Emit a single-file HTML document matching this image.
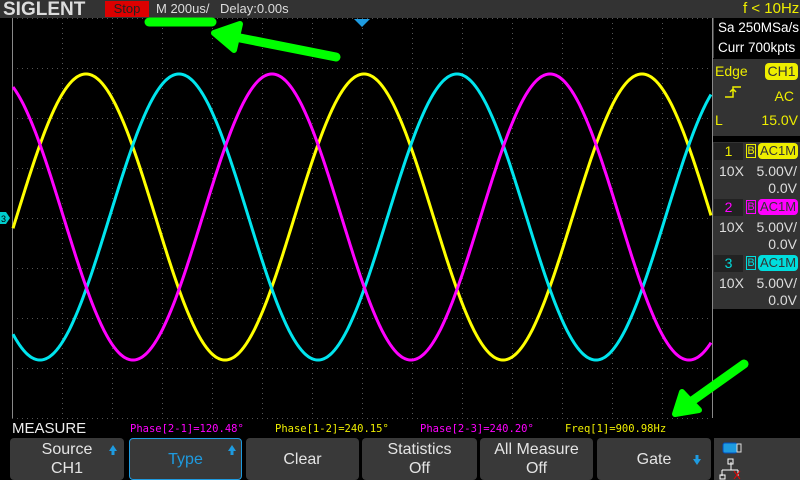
<!DOCTYPE html>
<html><head><meta charset="utf-8"><style>
*{margin:0;padding:0;box-sizing:border-box}
body{width:800px;height:480px;background:#000;position:relative;overflow:hidden;font-family:"Liberation Sans",sans-serif}
.abs{position:absolute}
.top{left:0;top:0;width:800px;height:18px;background:#333}
.btn{position:absolute;top:438px;height:42px;background:#393939;border-radius:4px;color:#e4e4e4;font-size:16px;text-align:center;line-height:19px;display:flex;flex-direction:column;justify-content:center}
.rp{position:absolute;left:713px;width:87px;color:#fff;font-size:13px;white-space:nowrap}
.mono{font-family:"DejaVu Sans Mono","Liberation Mono",monospace;font-size:10.5px;position:absolute;top:423px}
</style></head><body>
<div class="abs top"></div>
<div class="abs" style="left:3px;top:-1px;font-size:19px;font-weight:bold;color:#ddd;letter-spacing:0px;transform:scaleX(1.0);transform-origin:left">SIGLENT</div>
<div class="abs" style="left:105px;top:1px;width:44px;height:16px;background:#d00;color:#222;font-size:13px;text-align:center;line-height:16px">Stop</div>
<div class="abs" style="left:156px;top:1px;color:#ddd;font-size:13px">M 200us/</div>
<div class="abs" style="left:220px;top:1px;color:#ddd;font-size:13px">Delay:0.00s</div>
<div class="abs" style="left:743px;top:0px;color:#ee0;font-size:15px">f &lt; 10Hz</div>

<svg class="abs" style="left:0;top:0" width="800" height="480" id="sv">
<g stroke="#555" stroke-width="1" stroke-dasharray="1,4" id="grid"></g>
<line x1="12.5" y1="18" x2="12.5" y2="418" stroke="#888"/>
<line x1="712.5" y1="18" x2="712.5" y2="418" stroke="#888"/>
<polygon points="354,19 370,19 362,27" fill="#1e9be0"/>
<polygon points="0,212 6,212 10,218 6,224 0,224" fill="#0cc"/>
<text x="1" y="222" font-size="9" fill="#000" font-family="Liberation Sans">3</text>
<g fill="none" stroke-width="3" id="waves"></g>
<g stroke="#00ff00" stroke-linecap="round" fill="#00ff00">
<line x1="149" y1="22" x2="212" y2="22" stroke-width="9"/>
<line x1="336" y1="57" x2="235" y2="37" stroke-width="9"/>
<polygon points="214,33 240,24 234,50" stroke-width="6" stroke-linejoin="round"/>
<line x1="744" y1="364" x2="692" y2="401" stroke-width="9"/>
<polygon points="675,414 682,392 699,410" stroke-width="6" stroke-linejoin="round"/>
</g>
</svg>

<div class="rp" style="top:18px;height:40px;background:#000;border-left:1px solid #444;padding-left:4px;line-height:20px;font-size:13.5px">Sa 250MSa/s<br>Curr 700kpts</div>
<div class="rp" style="top:59px;height:77px;background:#333;color:#ee0;font-size:14px">
 <div class="abs" style="left:2px;top:4px">Edge</div>
 <div class="abs" style="left:52px;top:4px;width:33px;height:17px;background:#ee0;color:#333;border-radius:4px;text-align:center;line-height:17px">CH1</div>
 <svg class="abs" style="left:10px;top:25px" width="20" height="16"><path d="M2 13H10V3H18M10 5l-3 3M10 5l3 3" stroke="#ee0" fill="none" stroke-width="1.5"/></svg>
 <div class="abs" style="right:6px;top:29px">AC</div>
 <div class="abs" style="left:2px;top:53px">L</div>
 <div class="abs" style="right:2px;top:53px">15.0V</div>
</div>
<div class="rp" style="top:142px;height:56px;background:#333"></div>
<div class="rp" style="top:198px;height:56px;background:#333"></div>
<div class="rp" style="top:254px;height:55px;background:#333"></div>
<div id="chs"></div>

<div class="abs" style="left:12px;top:420px;color:#eee;font-size:15px">MEASURE</div>
<div class="mono" style="left:130px;color:#f0f">Phase[2-1]=120.48°</div>
<div class="mono" style="left:275px;color:#ee0">Phase[1-2]=240.15°</div>
<div class="mono" style="left:420px;color:#f0f">Phase[2-3]=240.20°</div>
<div class="mono" style="left:565px;color:#ee0">Freq[1]=900.98Hz</div>

<div class="btn" style="left:10px;width:114px">Source<br>CH1</div>
<div class="btn" style="left:129px;width:113px;border:1px solid #1e9be0;color:#1e9be0">Type</div>
<div class="btn" style="left:246px;width:113px">Clear</div>
<div class="btn" style="left:362px;width:115px">Statistics<br>Off</div>
<div class="btn" style="left:480px;width:113px">All Measure<br>Off</div>
<div class="btn" style="left:597px;width:114px">Gate</div>
<div class="abs" style="left:714px;top:438px;width:86px;height:42px;background:#393939"></div>
<svg class="abs" style="left:0;top:438px" width="800" height="42">
<path d="M109 13l4-6 4 6h-2.5v4h-3v-4z" fill="#1e9be0"/>
<path d="M228 13l4-6 4 6h-2.5v4h-3v-4z" fill="#1e9be0"/>
<path d="M693 21l4 6 4-6h-2.5v-4h-3v4z" fill="#1e9be0"/>
<rect x="723" y="5" width="14" height="10" rx="2" fill="#1e9be0" stroke="#0050c0"/>
<rect x="737" y="6" width="4" height="8" fill="none" stroke="#ddd"/>
<path d="M731 24v8M722 32v6M738 32v6M722 32h16" stroke="#fff" fill="none"/>
<rect x="728" y="21" width="5" height="5" fill="none" stroke="#fff"/>
<rect x="720" y="37" width="5" height="4" fill="none" stroke="#fff"/>
<path d="M734 33l6 8M740 33l-6 8" stroke="#e00"/>
</svg>

<script>
var sv=document.getElementById('grid'),s='';
for(var x=62;x<712;x+=50)s+='<line x1="'+(x+.5)+'" y1="18" x2="'+(x+.5)+'" y2="418"/>';
for(var y=18;y<=418;y+=50)s+='<line x1="12" y1="'+(y+.5)+'" x2="712" y2="'+(y+.5)+'"/>';
sv.innerHTML=s;
var w=document.getElementById('waves'),h='';
[['#ffff00',86],['#00e5ee',179],['#ff00ff',272]].forEach(function(c){
 var p='';for(var x=13;x<=711;x++){var y=217-143*Math.cos((x-c[1])/278*2*Math.PI);p+=(p?' L':'M')+x+' '+y.toFixed(1);}
 h+='<path d="'+p+'" stroke="'+c[0]+'"/>';});
w.innerHTML=h;
var cs='',cols=['#ee0','#f0f','#0dd'],tops=[142,198,254];
for(var i=0;i<3;i++){var t=tops[i];
cs+='<div class="abs" style="left:714px;top:'+(t+1)+'px;width:29px;height:17px;background:#222;color:'+cols[i]+';font-size:14px;text-align:center">'+(i+1)+'</div>';
cs+='<div class="abs" style="left:746px;top:'+(t+2)+'px;width:10px;height:14px;border:1px solid '+cols[i]+';color:'+cols[i]+';font-size:11px;line-height:12px;text-align:center">B</div>';
cs+='<div class="abs" style="left:758px;top:'+(t+1)+'px;width:40px;height:16px;background:'+cols[i]+';color:#333;border-radius:4px;font-size:13px;text-align:center;line-height:16px">AC1M</div>';
cs+='<div class="abs" style="left:719px;top:'+(t+21)+'px;color:#ddd;font-size:14px">10X</div>';
cs+='<div class="abs" style="right:3px;top:'+(t+21)+'px;color:#ddd;font-size:14px">5.00V/</div>';
cs+='<div class="abs" style="right:3px;top:'+(t+38)+'px;color:#ddd;font-size:14px">0.0V</div>';}
document.getElementById('chs').innerHTML=cs;
</script>
</body></html>
